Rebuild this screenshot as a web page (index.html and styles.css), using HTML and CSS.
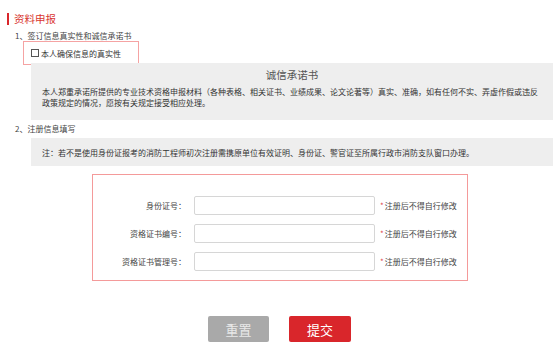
FILE: index.html
```html
<!DOCTYPE html>
<html lang="zh">
<head>
<meta charset="utf-8">
<link rel="stylesheet" href="styles.css">
</head>
<body>
<div class="page">
  <div class="title"><span class="title-text">资料申报</span></div>
  <div class="step">1、签订信息真实性和诚信承诺书</div>
  <label class="agree"><span class="check"></span><span>本人确保信息的真实性</span></label>
  <div class="panel promise">
    <div class="promise-title">诚信承诺书</div>
    <p class="promise-body">本人郑重承诺所提供的专业技术资格申报材料（各种表格、相关证书、业绩成果、论文论著等）真实、准确，如有任何不实、弄虚作假或违反政策规定的情况，愿按有关规定接受相应处理。</p>
  </div>
  <div class="step step2">2、注册信息填写</div>
  <div class="panel note">注：若不是使用身份证报考的消防工程师初次注册需携原单位有效证明、身份证、警官证至所属行政市消防支队窗口办理。</div>
  <div class="form-box">
    <div class="row"><span class="label">身份证号：</span><span class="input"></span><span class="hint"><i>*</i>注册后不得自行修改</span></div>
    <div class="row"><span class="label">资格证书编号：</span><span class="input"></span><span class="hint"><i>*</i>注册后不得自行修改</span></div>
    <div class="row"><span class="label">资格证书管理号：</span><span class="input"></span><span class="hint"><i>*</i>注册后不得自行修改</span></div>
  </div>
  <div class="actions">
    <button class="btn reset">重置</button>
    <button class="btn submit">提交</button>
  </div>
</div>
</body>
</html>
```

FILE: styles.css
```css
html, body {
  margin: 0;
  padding: 0;
  background: #fff;
}
body {
  font-family: "Noto Sans CJK SC", "Noto Sans", sans-serif;
  color: #444;
  font-size: 8px;
}
.page {
  width: 558px;
  padding-top: 13px;
}
.title {
  margin-left: 7px;
  border-left: 2px solid #d9262b;
  height: 12px;
  display: flex;
  align-items: center;
}
.title-text {
  margin-left: 5px;
  color: #d9362f;
  font-size: 10.5px;
  line-height: 12px;
}
.step {
  margin: 6px 0 0 15px;
  line-height: 10px;
  height: 10px;
  color: #444;
}
.agree {
  display: flex;
  align-items: center;
  margin: 0 0 0 23px;
  width: 114px;
  height: 22px;
  border: 1px solid #f5a3a3;
  box-sizing: content-box;
  padding-left: 0;
  color: #333;
}
.check {
  width: 6px;
  height: 6px;
  border: 1px solid #555;
  margin: 0 2px 0 7px;
  background: #fff;
}
.panel {
  margin-left: 31px;
  width: 522px;
  background: #eeeeee;
  box-sizing: border-box;
}
.promise {
  margin-top: -2px;
  height: 57px;
  padding: 5px 11px 0 11px;
}
.promise-title {
  text-align: center;
  font-size: 10.5px;
  line-height: 14px;
  color: #555;
}
.promise-body {
  margin: 4px 0 0 0;
  line-height: 11px;
  color: #333;
}
.step2 {
  margin-top: 4px;
}
.note {
  margin-top: 4px;
  height: 28px;
  padding: 10px 11px 0 11px;
  line-height: 10px;
  color: #333;
}
.form-box {
  margin: 8px 0 0 92px;
  width: 376px;
  height: 107px;
  box-sizing: border-box;
  border: 1px solid #f49a9a;
  padding-top: 21px;
  display: flex;
  flex-direction: column;
  gap: 9px;
}
.row {
  display: flex;
  align-items: center;
  height: 19px;
}
.label {
  width: 93px;
  text-align: right;
  color: #444;
}
.input {
  margin-left: 8px;
  width: 181px;
  height: 19px;
  box-sizing: border-box;
  border: 1px solid #d6d6d6;
  border-radius: 2px;
  background: #fff;
}
.hint {
  margin-left: 5px;
  color: #444;
}
.hint i {
  font-style: normal;
  color: #e0474c;
  margin-right: 1px;
}
.actions {
  display: flex;
  gap: 20px;
  margin: 35px 0 0 208px;
}
.btn {
  width: 61px;
  height: 26px;
  border: none;
  border-radius: 2px;
  color: #fff;
  font-family: "Noto Sans CJK SC", sans-serif;
  font-size: 13px;
  padding: 0;
}
.reset {
  background: #a9a9a9;
  color: #e8e8e8;
}
.submit {
  width: 62px;
  background: #d9262b;
}
```
